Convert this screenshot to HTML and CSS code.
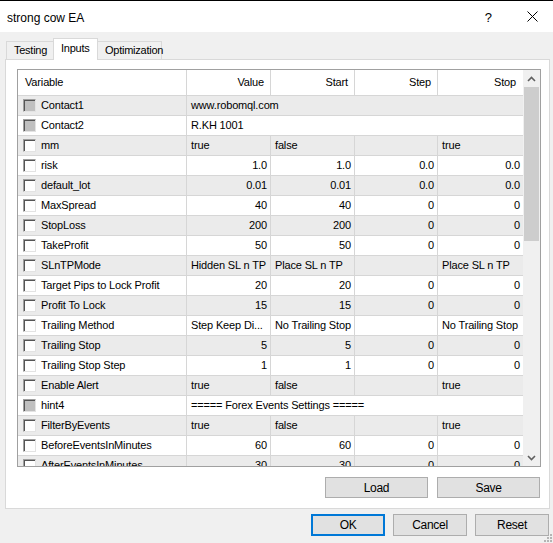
FILE: index.html
```html
<!DOCTYPE html>
<html lang="en">
<head>
    <meta charset="UTF-8">
    <title>strong cow EA</title>
    <link rel="stylesheet" href="styles.css">
</head>
<body>
    <div class="window">
        <div class="titlebar">
            <span class="title">strong cow EA</span>
            <span class="help">?</span>
            <svg class="close" width="11" height="11" viewBox="0 0 11 11"><path d="M0.5 0.5 L10.5 10.5 M10.5 0.5 L0.5 10.5" stroke="#000" stroke-width="1"/></svg>
        </div>

        <div class="tabs">
            <div class="tab">Testing</div>
            <div class="tab active">Inputs</div>
            <div class="tab">Optimization</div>
        </div>

        <div class="panel">
            <div class="list">
                <div class="grid">
                    <div class="row head">
                        <div class="c name">Variable</div>
                        <div class="c num">Value</div>
                        <div class="c num">Start</div>
                        <div class="c num">Step</div>
                        <div class="c num">Stop</div>
                    </div>
                    <div class="row alt">
                        <div class="c var"><span class="chk off"></span>Contact1</div>
                        <div class="c span">www.robomql.com</div>
                    </div>
                    <div class="row">
                        <div class="c var"><span class="chk off"></span>Contact2</div>
                        <div class="c span">R.KH 1001</div>
                    </div>
                    <div class="row alt">
                        <div class="c var"><span class="chk"></span>mm</div>
                        <div class="c">true</div><div class="c">false</div><div class="c"></div><div class="c">true</div>
                    </div>
                    <div class="row">
                        <div class="c var"><span class="chk"></span>risk</div>
                        <div class="c num">1.0</div><div class="c num">1.0</div><div class="c num">0.0</div><div class="c num">0.0</div>
                    </div>
                    <div class="row alt">
                        <div class="c var"><span class="chk"></span>default_lot</div>
                        <div class="c num">0.01</div><div class="c num">0.01</div><div class="c num">0.0</div><div class="c num">0.0</div>
                    </div>
                    <div class="row">
                        <div class="c var"><span class="chk"></span>MaxSpread</div>
                        <div class="c num">40</div><div class="c num">40</div><div class="c num">0</div><div class="c num">0</div>
                    </div>
                    <div class="row alt">
                        <div class="c var"><span class="chk"></span>StopLoss</div>
                        <div class="c num">200</div><div class="c num">200</div><div class="c num">0</div><div class="c num">0</div>
                    </div>
                    <div class="row">
                        <div class="c var"><span class="chk"></span>TakeProfit</div>
                        <div class="c num">50</div><div class="c num">50</div><div class="c num">0</div><div class="c num">0</div>
                    </div>
                    <div class="row alt">
                        <div class="c var"><span class="chk"></span>SLnTPMode</div>
                        <div class="c">Hidden SL n TP</div><div class="c">Place SL n TP</div><div class="c"></div><div class="c">Place SL n TP</div>
                    </div>
                    <div class="row">
                        <div class="c var"><span class="chk"></span>Target Pips to Lock Profit</div>
                        <div class="c num">20</div><div class="c num">20</div><div class="c num">0</div><div class="c num">0</div>
                    </div>
                    <div class="row alt">
                        <div class="c var"><span class="chk"></span>Profit To Lock</div>
                        <div class="c num">15</div><div class="c num">15</div><div class="c num">0</div><div class="c num">0</div>
                    </div>
                    <div class="row">
                        <div class="c var"><span class="chk"></span>Trailing Method</div>
                        <div class="c">Step Keep Di...</div><div class="c">No Trailing Stop</div><div class="c"></div><div class="c">No Trailing Stop</div>
                    </div>
                    <div class="row alt">
                        <div class="c var"><span class="chk"></span>Trailing Stop</div>
                        <div class="c num">5</div><div class="c num">5</div><div class="c num">0</div><div class="c num">0</div>
                    </div>
                    <div class="row">
                        <div class="c var"><span class="chk"></span>Trailing Stop Step</div>
                        <div class="c num">1</div><div class="c num">1</div><div class="c num">0</div><div class="c num">0</div>
                    </div>
                    <div class="row alt">
                        <div class="c var"><span class="chk"></span>Enable Alert</div>
                        <div class="c">true</div><div class="c">false</div><div class="c"></div><div class="c">true</div>
                    </div>
                    <div class="row">
                        <div class="c var"><span class="chk off"></span>hint4</div>
                        <div class="c span">===== Forex Events Settings =====</div>
                    </div>
                    <div class="row alt">
                        <div class="c var"><span class="chk"></span>FilterByEvents</div>
                        <div class="c">true</div><div class="c">false</div><div class="c"></div><div class="c">true</div>
                    </div>
                    <div class="row">
                        <div class="c var"><span class="chk"></span>BeforeEventsInMinutes</div>
                        <div class="c num">60</div><div class="c num">60</div><div class="c num">0</div><div class="c num">0</div>
                    </div>
                    <div class="row alt">
                        <div class="c var"><span class="chk"></span>AfterEventsInMinutes</div>
                        <div class="c num">30</div><div class="c num">30</div><div class="c num">0</div><div class="c num">0</div>
                    </div>
                </div>
                <div class="scrollbar">
                    <div class="sb-btn">
                        <svg width="9" height="6" viewBox="0 0 9 6"><path d="M1 5 L4.5 1.5 L8 5" fill="none" stroke="#606060" stroke-width="1.6"/></svg>
                    </div>
                    <div class="sb-thumb"></div>
                    <div class="sb-track"></div>
                    <div class="sb-btn">
                        <svg width="9" height="6" viewBox="0 0 9 6"><path d="M1 1 L4.5 4.5 L8 1" fill="none" stroke="#606060" stroke-width="1.6"/></svg>
                    </div>
                </div>
            </div>

            <div class="panel-buttons">
                <button class="btn wide">Load</button>
                <button class="btn wide">Save</button>
            </div>
        </div>

        <div class="dialog-buttons">
            <button class="btn default">OK</button>
            <button class="btn">Cancel</button>
            <button class="btn">Reset</button>
        </div>

        <svg class="grip" width="9" height="9" viewBox="0 0 9 9">
            <rect x="7" y="1" width="2" height="2" fill="#b5b5b5"/>
            <rect x="4" y="4" width="2" height="2" fill="#b5b5b5"/>
            <rect x="7" y="4" width="2" height="2" fill="#b5b5b5"/>
            <rect x="1" y="7" width="2" height="2" fill="#b5b5b5"/>
            <rect x="4" y="7" width="2" height="2" fill="#b5b5b5"/>
            <rect x="7" y="7" width="2" height="2" fill="#b5b5b5"/>
        </svg>
    </div>
</body>
</html>
```

FILE: styles.css
```css
body {
    margin: 0;
    background-color: #f0f0f0;
    font-family: "Liberation Sans", Arial, sans-serif;
    font-size: 11px;
    color: #000;
}
.window {
    position: relative;
    width: 553px;
    height: 543px;
    overflow: hidden;
    background-color: #f0f0f0;
}

/* title bar */
.titlebar {
    display: flex;
    align-items: center;
    height: 31px;
    border-top: 1px solid #000;
    background-color: #fff;
    padding-left: 7px;
}
.title {
    flex: 1;
    font-size: 12px;
    padding-top: 2px;
}
.help {
    font-size: 13px;
    margin-right: 35px;
    padding-top: 1px;
}
.close {
    margin-right: 15px;
}

/* tabs */
.tabs {
    display: flex;
    align-items: flex-end;
    height: 20px;
    padding: 7px 0 0 6px;
}
.tab {
    height: 17px;
    line-height: 17px;
    padding: 0 6px 0 7px;
    border: 1px solid #d9d9d9;
    border-bottom: none;
    background-color: #f0f0f0;
    letter-spacing: -0.25px;
}
.tab:first-child {
    width: 33px;
    border-right: none;
}
.tab.active {
    position: relative;
    z-index: 1;
    height: 20px;
    line-height: 18px;
    width: 30px;
    margin-bottom: -1px;
    padding: 0 6px 1px 7px;
    background-color: #fff;
}
.tab:last-child {
    width: 51px;
    border-left: none;
    padding: 0 5px 0 7px;
}

/* main panel */
.panel {
    width: 543px;
    height: 448px;
    margin-left: 5px;
    border: 1px solid #d9d9d9;
    background-color: #fff;
}
.list {
    display: flex;
    width: 522px;
    height: 396px;
    margin: 9px 0 0 11px;
    border: 1px solid #a0a0a0;
    overflow: hidden;
}
.grid {
    flex: 1;
    overflow: hidden;
}
.row {
    display: grid;
    grid-template-columns: 169px 84px 84px 83px 85px;
    height: 19px;
    line-height: 19px;
    border-bottom: 1px solid #d6d6d6;
    background-color: #fff;
    white-space: nowrap;
    letter-spacing: -0.15px;
}
.row.alt {
    background-color: #ebebeb;
}
.row.head {
    height: 25px;
    line-height: 25px;
}
.c {
    overflow: hidden;
    padding-left: 4px;
    border-right: 1px solid #d6d6d6;
}
.c:last-child {
    border-right: none;
}
.c.num {
    text-align: right;
    padding-left: 0;
    padding-right: 3px;
}
.head .c.num {
    padding-right: 6px;
}
.head .c:last-child {
    padding-right: 7px;
}
.c.name {
    padding-left: 7px;
}
.c.span {
    grid-column: 2 / -1;
}
.c.var {
    display: flex;
    align-items: center;
    padding-left: 5px;
}
.chk {
    width: 11px;
    height: 11px;
    margin-right: 5px;
    border: 1px solid;
    border-color: #a0a0a0 #e3e3e3 #e3e3e3 #a0a0a0;
    box-shadow: inset 1px 1px 0 #555;
    background-color: #fff;
}
.chk.off {
    background-color: #c0c0c0;
}

/* scrollbar */
.scrollbar {
    display: flex;
    flex-direction: column;
    width: 17px;
    background-color: #f0f0f0;
}
.sb-btn {
    display: flex;
    align-items: center;
    justify-content: center;
    height: 17px;
}
.sb-thumb {
    height: 154px;
    margin: 0 1px;
    background-color: #cdcdcd;
}
.sb-track {
    flex: 1;
}

/* buttons */
.btn {
    font-family: "Liberation Sans", Arial, sans-serif;
    font-size: 12px;
    letter-spacing: -0.3px;
    color: #000;
    background-color: #e1e1e1;
    border: 1px solid #adadad;
    padding: 0;
    margin: 0;
}
.panel-buttons {
    display: flex;
    justify-content: flex-end;
    gap: 9px;
    margin-top: 10px;
    padding-right: 9px;
}
.btn.wide {
    width: 103px;
    height: 21px;
}
.dialog-buttons {
    display: flex;
    justify-content: flex-end;
    gap: 8px;
    margin-top: 5px;
    padding-right: 4px;
}
.dialog-buttons .btn {
    width: 74px;
    height: 22px;
}
.btn.default {
    border: 2px solid #0078d7;
}
.grip {
    position: absolute;
    right: 1px;
    bottom: 1px;
}
```
